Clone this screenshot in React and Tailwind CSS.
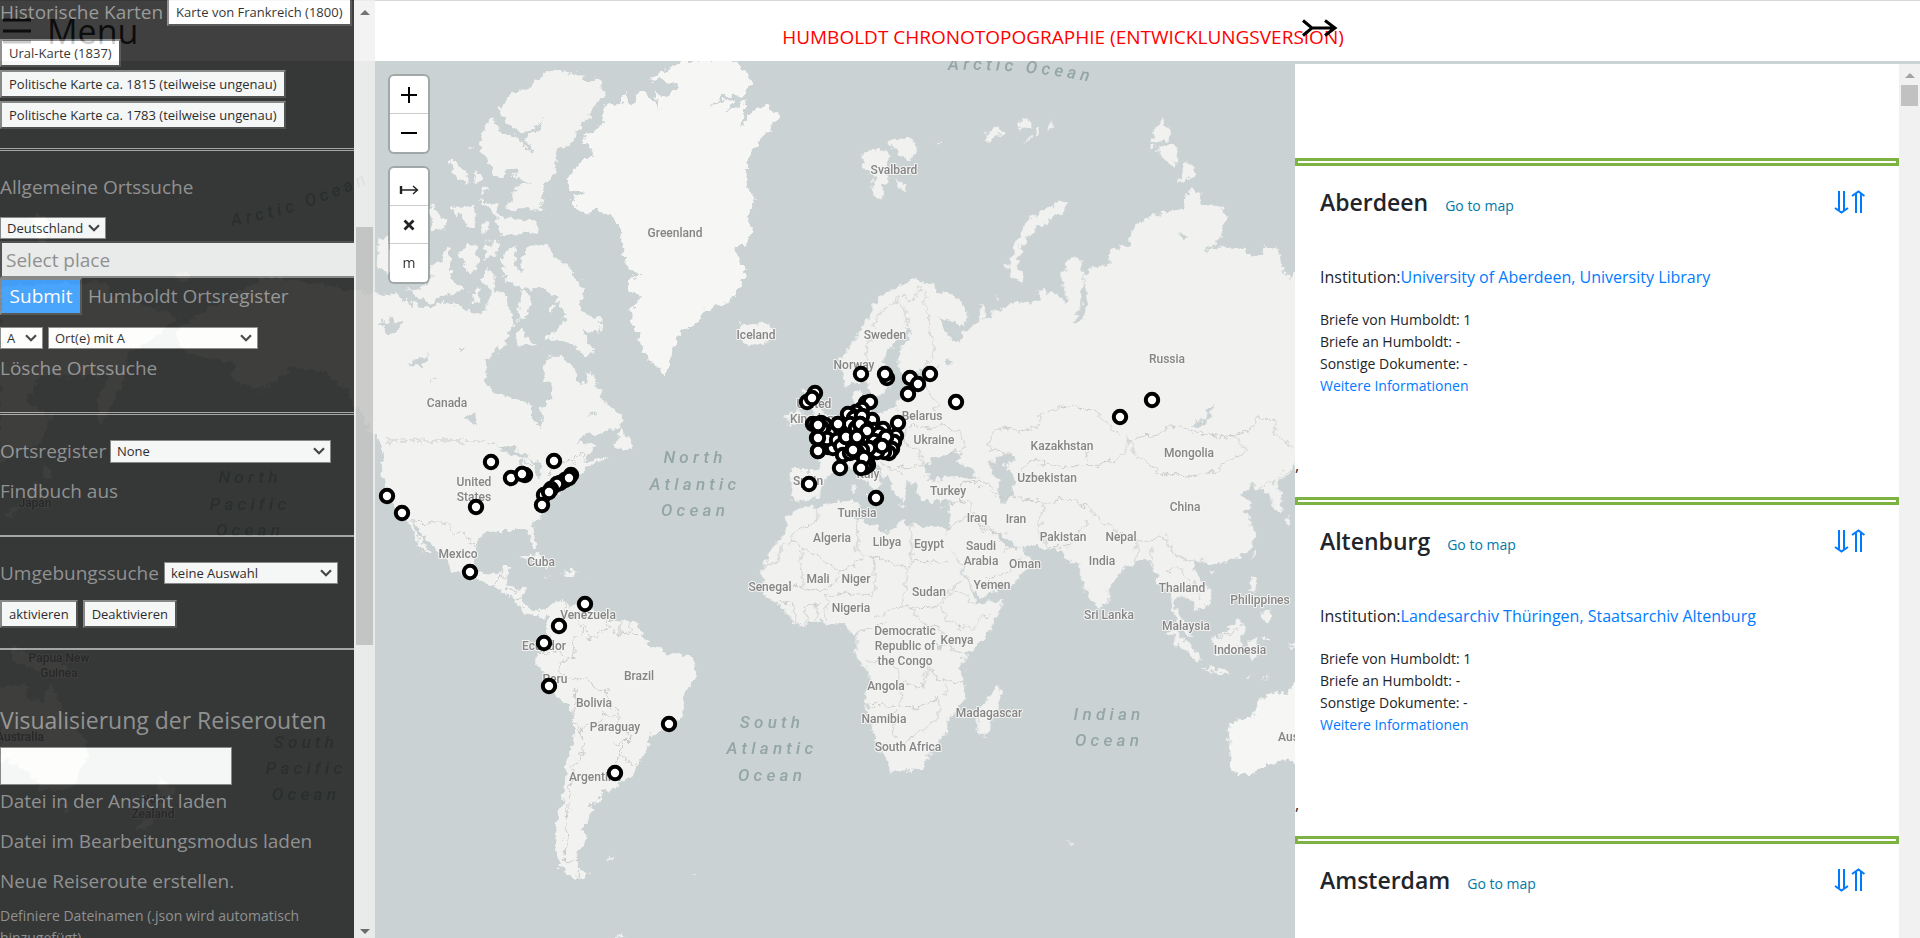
import React from "react";

/* Land outlines; frames A and B are drawn at three times the map scale. */
const LAND_A = [
  // North and South America
  "M15,885 L60,880 130,905 140,930 230,905 300,935 340,942 365,870 330,840 350,800 370,830 375,870 410,885 420,940 430,975 400,1040 360,1070 345,1110 350,1150 370,1178 400,1185 450,1200 480,1215 490,1260 510,1285 520,1260 512,1230 540,1200 545,1150 522,1135 530,1070 575,1070 610,1100 620,1140 640,1155 665,1115 700,1200 760,1250 755,1280 700,1300 640,1305 620,1330 680,1335 640,1382 720,1370 650,1405 620,1430 590,1450 550,1490 520,1520 515,1550 485,1570 490,1600 502,1640 492,1645 470,1590 400,1590 340,1600 315,1625 315,1700 330,1720 390,1720 395,1695 425,1695 410,1735 405,1755 460,1765 460,1810 500,1835 525,1825 545,1810 590,1800 600,1820 640,1810 700,1840 720,1860 800,1867 825,1925 880,1950 960,1970 982,1985 980,2030 945,2070 935,2150 895,2190 840,2205 830,2250 780,2330 745,2350 740,2370 690,2372 690,2405 665,2410 660,2455 635,2480 652,2510 620,2560 625,2600 655,2630 620,2637 570,2600 555,2540 560,2470 580,2400 590,2280 610,2220 608,2130 540,2080 520,2020 495,1990 500,1970 540,1920 530,1880 540,1850 500,1847 470,1840 430,1795 385,1770 360,1750 300,1740 240,1710 230,1680 190,1640 130,1562 135,1590 185,1668 150,1640 120,1570 90,1540 50,1490 35,1400 40,1340 15,1310 -10,1270 -80,1160 -150,1110 -230,1100 -390,1225 -310,1160 -410,1150 -410,1090 -550,1060 -590,1000 -510,940 -400,880 -310,830 -150,850 Z",
  // Greenland
  "M705,375 L700,320 735,315 770,280 775,310 790,320 815,265 835,290 872,330 850,275 892,290 925,255 885,240 840,237 880,215 920,200 940,180 1095,180 1145,250 1120,285 1060,288 1010,325 1060,300 1095,305 1065,345 1130,300 1112,380 1150,330 1190,318 1232,345 1200,385 1150,440 1135,480 1130,560 1160,600 1130,650 1150,690 1130,730 1090,740 1125,820 1110,865 1080,900 1005,930 975,975 930,992 900,1080 890,1122 850,1100 820,1050 790,980 785,930 812,890 775,870 775,840 812,830 770,800 750,690 735,655 690,630 640,640 600,595 650,575 600,570 582,540 625,495 672,468 665,440 640,430 645,405 Z",
  // Ellesmere and Axel Heiberg
  "M705,275 L665,335 640,370 600,435 560,450 555,490 560,520 525,550 520,600 510,625 405,625 430,590 430,560 480,545 430,530 440,505 410,500 400,535 370,525 350,470 330,430 345,380 365,350 400,400 440,412 480,455 490,450 455,412 500,395 525,350 495,385 440,395 400,360 385,325 440,270 475,268 500,235 550,208 640,225 640,245 680,235 Z",
  // Baffin
  "M440,735 L400,762 398,810 415,850 465,868 520,860 560,900 590,950 565,990 530,1005 530,1018 590,1020 650,1075 670,1050 640,990 680,1000 700,965 640,935 630,900 637,870 600,800 545,770 540,740 470,740 450,780 460,820 430,800 Z",
  "M330,600 L380,612 385,650 440,655 500,660 505,700 390,705 375,645 Z",
  "M110,870 L180,850 185,790 215,790 225,740 240,745 240,830 280,870 220,885 180,910 150,895 Z",
  "M20,800 L25,715 60,710 60,820 Z M180,640 L190,612 205,645 235,660 225,685 185,688 Z",
  "M245,620 L310,618 312,680 290,680 275,640 255,650 Z M265,765 L295,730 320,738 325,800 300,822 Z M343,728 L392,728 375,765 345,780 Z",
  "M235,480 L255,480 295,525 295,555 255,530 Z M315,510 L340,540 320,550 Z M335,565 L358,562 358,575 335,575 Z M335,665 L358,665 355,700 335,692 Z M295,430 L303,440 297,450 Z",
  "M435,1010 L455,985 495,1040 460,1030 440,1040 Z M300,880 L325,870 335,910 315,915 Z M540,920 L555,915 550,940 538,940 Z M455,870 L485,890 475,945 445,960 Z",
  "M1105,970 L1190,970 1215,1000 1195,1025 1160,1042 1115,1022 Z",
  "M755,1285 L785,1330 787,1350 730,1340 Z",
  "M440,1670 L500,1665 555,1705 530,1708 490,1680 Z M575,1715 L610,1712 625,1722 585,1732 Z M525,1727 L540,1728 530,1731 Z M645,1728 L657,1728 650,1732 Z",
  "M710,2572 L738,2570 722,2580 Z M728,2812 L760,2800 760,2812 Z M965,2620 L972,2620 970,2625 Z",
];
const LAND_B = [
  // Eurasia
  "M-148,1410 L-60,1410 -65,1350 -82,1310 -30,1300 0,1260 50,1230 38,1185 60,1160 62,1200 75,1225 110,1238 170,1225 185,1180 205,1150 180,1110 175,1060 205,1010 215,985 195,985 130,1080 155,1140 125,1190 100,1200 75,1130 45,1150 15,1160 0,1080 35,1035 80,960 110,900 170,860 220,835 275,850 290,875 340,885 370,910 385,950 370,975 295,955 320,1000 345,1030 380,985 420,970 420,915 440,925 435,955 470,930 560,905 600,905 590,870 640,880 682,912 665,830 690,775 722,775 732,830 722,920 700,968 722,965 745,910 732,830 750,800 810,795 812,745 868,735 868,690 950,642 1030,625 1030,590 1060,568 1080,580 1085,612 1140,615 1158,650 1140,720 1085,757 1140,735 1210,745 1220,762 1260,765 1270,740 1315,748 1325,800 1350,840 1365,805 1400,800 1400,1390 1365,1400 1310,1450 1325,1490 1325,1530 1300,1530 1290,1480 1255,1470 1240,1450 1205,1482 1240,1515 1215,1530 1248,1600 1230,1650 1180,1680 1120,1695 1070,1680 1060,1710 1110,1770 1110,1810 1072,1832 1050,1800 1012,1780 1005,1815 1060,1915 1010,1880 990,1780 960,1760 930,1680 875,1690 805,1755 802,1810 780,1832 750,1800 725,1740 720,1690 690,1690 660,1650 590,1645 530,1640 500,1610 465,1590 500,1650 545,1640 580,1690 520,1750 430,1790 408,1782 370,1710 315,1610 330,1580 330,1500 240,1500 225,1450 200,1445 190,1505 165,1480 145,1440 95,1380 125,1450 108,1480 40,1400 0,1400 -50,1440 -60,1490 -100,1505 -148,1495 Z",
  // Africa
  "M-110,1520 L-60,1520 0,1505 50,1500 60,1530 50,1555 110,1580 150,1600 180,1560 210,1575 315,1582 320,1615 360,1700 400,1780 410,1810 490,1800 470,1860 430,1920 365,1980 370,2050 380,2100 325,2150 325,2190 295,2230 240,2305 150,2320 140,2280 100,2200 75,2110 90,2030 50,1970 50,1900 0,1872 -40,1875 -60,1860 -130,1877 -180,1820 -230,1780 -232,1690 -200,1640 -160,1590 -160,1555 Z",
  "M475,2060 L485,2085 460,2150 440,2205 415,2200 412,2140 430,2110 Z",
  "M1440,2050 L1365,2050 1345,2085 1300,2075 1255,2110 1240,2150 1165,2170 1175,2300 1190,2322 1225,2322 1270,2300 1330,2280 1365,2285 1440,2285 Z",
  "M985,1890 L1010,1895 1080,1970 1075,1992 1010,1930 Z M1078,2000 L1165,2013 1165,2022 1080,2008 Z M1110,1915 L1150,1900 1195,1857 1212,1880 1195,1960 1130,1960 Z",
  "M1235,1730 L1250,1735 1245,1780 1232,1770 Z M1262,1845 L1292,1830 1290,1865 1270,1860 Z M1240,1650 L1247,1655 1235,1690 Z M1110,1715 L1128,1712 1120,1728 Z M1225,1920 L1250,1915 1250,1970 1235,1985 Z M1265,1914 L1285,1914 1285,1920 1265,1920 Z M1215,2023 L1235,2028 1230,2032 Z M1265,2040 L1290,2026 1275,2038 Z M1345,1935 L1365,1938 1362,1948 1350,1945 Z M1335,1560 L1350,1545 1352,1565 1340,1580 Z",
  // British Isles
  "M-110,1170 L-75,1180 -60,1225 -30,1260 -45,1282 -100,1285 -75,1255 -95,1200 Z M-160,1250 L-130,1225 -110,1245 -115,1275 -155,1280 Z",
  // Svalbard and the Arctic islands
  "M65,455 L100,450 120,440 145,460 145,545 130,555 128,600 105,590 95,550 110,530 80,510 65,485 Z M145,430 L160,410 200,415 235,435 225,460 200,478 175,465 Z M170,535 L200,560 195,578 175,560 Z M285,425 L300,420 300,428 Z",
  "M437,400 L465,385 495,390 480,405 445,425 Z M530,380 L560,345 570,380 550,390 Z M585,395 L600,385 605,400 592,410 Z M620,385 L640,362 638,385 Z M548,425 L575,408 570,422 Z",
  "M655,605 L682,603 675,635 620,665 580,690 545,740 535,790 558,845 520,835 500,800 530,730 560,660 600,635 Z",
  "M965,357 L990,390 985,420 935,430 940,390 Z M950,440 L1010,435 1012,500 990,500 955,460 Z M1040,478 L1068,515 1065,530 1012,550 1025,510 Z M922,435 L942,440 935,455 Z M465,885 L480,890 468,902 Z M1145,708 L1155,715 1145,722 Z",
  "M38,1450 L48,1450 46,1480 38,1480 Z M36,1180 L55,1175 50,1205 38,1200 Z M75,1480 L100,1485 95,1500 Z M170,1512 L200,1518 190,1522 Z M295,1525 L310,1525 300,1530 Z M680,2525 L697,2532 688,2538 Z",
];
/* Western edge: Siberia, Japan, Australia and New Zealand */
const LAND_C = [
  "M0,860 L180,850 330,850 330,890 420,910 540,950 450,1020 385,1060 380,1130 300,1280 288,1200 330,1120 260,1130 120,1130 80,1200 150,1250 130,1320 60,1350 0,1400 Z",
  "M130,1390 L160,1410 150,1440 130,1430 Z M100,1450 L120,1450 110,1490 60,1520 20,1560 15,1540 80,1500 Z",
  "M0,2060 L80,2055 75,2090 130,2110 150,2048 182,2120 200,2160 260,2220 262,2270 220,2360 190,2370 130,2372 80,2310 0,2280 Z M180,2405 L205,2400 195,2435 Z",
  "M30,1940 L80,1955 180,1990 235,2030 180,2020 110,2010 30,1980 Z",
  "M475,2325 L495,2345 525,2370 490,2430 475,2400 Z M450,2445 L470,2440 440,2490 405,2485 Z",
  "M520,825 L560,815 575,835 540,845 Z M90,660 L115,640 150,670 130,740 150,750 110,720 Z",
];
const WATER_A = [
  "M20,975 L70,955 100,975 60,1005 45,985 Z M115,1090 L182,1060 150,1095 118,1103 Z M270,1045 L282,1045 278,1060 Z M178,1140 L205,1130 185,1145 Z M285,1245 L310,1245 322,1270 300,1265 Z M660,1238 L680,1238 665,1245 Z",
  "M385,1352 L425,1335 480,1372 470,1380 435,1365 Z M445,1385 L460,1385 455,1440 445,1430 Z M480,1375 L520,1400 500,1430 Z M520,1425 L560,1405 545,1420 Z",
];
const WATER_B = [
  "M255,1400 L275,1375 300,1368 330,1360 365,1360 345,1385 400,1405 415,1440 340,1428 275,1440 252,1425 Z",
  "M445,1395 L490,1360 528,1370 490,1400 522,1430 520,1490 492,1510 470,1480 478,1440 Z",
  "M1055,1280 L1100,1245 1120,1205 1118,1235 1085,1280 Z M315,1075 L335,1085 325,1098 Z M1015,700 L1045,708 1020,715 Z M735,1370 L752,1358 740,1380 Z",
  "M195,1125 L270,1100 290,1105 215,1140 Z M290,1930 L305,1925 300,1955 Z M270,1985 L280,2010 275,2010 Z M312,2040 L320,2090 315,2085 Z",
];
const BORDERS_A = [
  "M45,1323 L340,1323 380,1335 440,1360 485,1400 M570,1388 L610,1388 630,1350 645,1385",
  "M120,1562 L200,1568 230,1570 260,1600 285,1600 300,1630 318,1642",
  "M370,1760 L390,1725 410,1735 M400,1750 L420,1775 460,1765 M435,1795 L460,1795",
  "M590,1805 L585,1840 620,1860 640,1900 615,1920 610,1970 570,1990 575,2020 605,2035 M640,1870 L660,1915 720,1880 740,1905 800,1900 M700,1850 L720,1880 M750,1860 L750,1905 M780,1865 L780,1900 M500,1960 L550,1950 580,1965",
  "M605,2045 L655,2030 665,2055 715,2080 715,2110 745,2130 740,2160 700,2140 690,2170 650,2170 630,2200 610,2150 620,2060 M740,2160 L750,2190 790,2210 740,2260 740,2340 M730,2230 L780,2220 M750,2265 L795,2295 M635,2180 L640,2260 610,2300 595,2400 590,2500 580,2580 625,2585 625,2630",
];
const BORDERS_B = [
  "M105,990 L110,950 170,895 190,920 205,980 M170,890 L220,900 235,865 260,880 255,920 270,960 270,1010 285,1050 250,1105 M78,1080 L78,1035 105,1000",
  "M200,1150 L260,1160 290,1215 285,1240 190,1250 M190,1275 L280,1285 300,1270 370,1310 375,1340 330,1365 M190,1275 L195,1330 235,1345 250,1400 180,1400 M110,1238 L115,1300 M115,1300 L190,1340 M120,1390 L180,1420",
  "M510,1360 L450,1350 445,1310 490,1280 540,1295 600,1280 600,1240 690,1215 710,1220 770,1230 815,1290 870,1320 830,1380 750,1400 650,1400 580,1380 545,1400 545,1420 M870,1320 L950,1305 1000,1275 1080,1300 1180,1310 1225,1355 1145,1390 1135,1410 1070,1430 960,1420 880,1360 870,1320 M1170,1310 L1230,1290 1250,1250 1300,1260 1310,1310 1360,1340",
  "M360,1450 L440,1450 465,1490 530,1490 610,1510 680,1495 740,1520 790,1570 880,1620 930,1620 980,1610 1000,1660 1040,1680 1095,1680 M610,1510 L595,1600 620,1640 690,1640 740,1560 M330,1510 L380,1500 430,1590 460,1600 M320,1590 L380,1550 470,1600 M430,1740 L510,1720 545,1670 M890,1620 L890,1690 M930,1640 L940,1700 M985,1710 L1010,1700 1050,1740 1080,1800 M1255,1470 L1310,1435 1365,1395 M1120,1915 L1170,1900 1200,1880",
  "M215,1575 L215,1685 330,1685 M205,1710 L115,1670 75,1670 50,1650 50,1560 M215,1685 L205,1720 185,1800 210,1825 290,1820 360,1740 M-230,1695 L-190,1690 -175,1640 -145,1620 -145,1600 -60,1560 -70,1520 M-145,1620 L0,1715 75,1670 M-120,1650 L-110,1760 -145,1760 M-110,1760 L-60,1770 -10,1750 0,1715 M100,1670 L105,1760 95,1790 0,1780 -40,1790 -40,1860 M-100,1870 L-110,1820 -60,1810 M-70,1860 L-75,1810 M-180,1810 L-140,1815 -130,1870",
  "M110,1850 L200,1815 250,1875 300,1880 320,1940 370,1965 M300,1820 L330,1870 390,1890 430,1850 460,1840 M340,1760 L400,1810 M50,1900 L140,1870 M80,1980 L160,1980 180,2050 250,2060 260,2010 320,2050 380,2040 M180,2050 L185,2120 75,2115 M185,2120 L230,2120 300,2095 290,2160 220,2210 160,2250 M165,2130 L160,2220 M260,1980 L275,2020",
];

const COUNTRIES = [
  ["Greenland", 675, 237], ["Iceland", 756, 339], ["Canada", 447, 407], ["United", 474, 486], ["States", 474, 501],
  ["Mexico", 458, 558], ["Cuba", 541, 566], ["Venezuela", 588, 619], ["Ecuador", 544, 650], ["Peru", 555, 683],
  ["Brazil", 639, 680], ["Bolivia", 594, 707], ["Paraguay", 615, 731], ["Argentina", 595, 781], ["Spain", 808, 485],
  ["Svalbard", 894, 174], ["Sweden", 885, 339], ["Norway", 854, 369], ["Russia", 1167, 363], ["Belarus", 922, 420],
  ["Ukraine", 934, 444], ["Kazakhstan", 1062, 450], ["Mongolia", 1189, 457], ["United", 814, 408], ["Kingdom", 814, 423],
  ["Uzbekistan", 1047, 482], ["Turkey", 948, 495], ["China", 1185, 511], ["Iraq", 977, 522], ["Iran", 1016, 523],
  ["Italy", 868, 478], ["Tunisia", 857, 517], ["Pakistan", 1063, 541], ["Nepal", 1121, 541], ["Saudi", 981, 550],
  ["Arabia", 981, 565], ["Oman", 1025, 568], ["India", 1102, 565], ["Algeria", 832, 542], ["Libya", 887, 546],
  ["Egypt", 929, 548], ["Yemen", 992, 589], ["Mali", 818, 583], ["Niger", 856, 583], ["Sudan", 929, 596],
  ["Senegal", 770, 591], ["Nigeria", 851, 612], ["Democratic", 905, 635], ["Republic of", 905, 650], ["the Congo", 905, 665],
  ["Kenya", 957, 644], ["Thailand", 1182, 592], ["Philippines", 1260, 604], ["Sri Lanka", 1109, 619], ["Malaysia", 1186, 630],
  ["Indonesia", 1240, 654], ["Angola", 886, 690], ["Madagascar", 989, 717], ["Namibia", 884, 723], ["South Africa", 908, 751],
  ["Australia", 1302, 741], ["Japan", 35, 507], ["Papua New", 59, 662], ["Guinea", 59, 677], ["Australia", 20, 741],
  ["New", 153, 803], ["Zealand", 153, 818],
];
const OCEANS = [
  ["North", 695, 463], ["Atlantic", 695, 490], ["Ocean", 695, 516],
  ["South", 772, 728], ["Atlantic", 772, 754], ["Ocean", 772, 781],
  ["Indian", 1109, 720], ["Ocean", 1109, 746],
  ["North", 250, 483], ["Pacific", 250, 510], ["Ocean", 250, 536],
  ["South", 306, 748], ["Pacific", 306, 774], ["Ocean", 306, 800],
];
const PLACES = [
  [387, 496], [402, 513], [476, 507], [491, 462], [554, 461], [525, 475], [511, 478], [522, 474],
  [571, 475], [565, 480], [560, 483], [569, 478], [557, 484], [544, 495], [551, 489], [549, 492], [542, 505],
  [470, 572], [585, 604], [559, 626], [544, 643], [549, 686], [669, 724], [615, 773], [809, 484],
  [861, 374], [887, 378], [885, 374], [910, 378], [918, 384], [908, 394], [930, 374], [956, 402],
  [1152, 400], [1120, 417], [815, 393], [807, 402], [812, 398],
  [866, 403], [870, 402], [862, 409], [856, 412], [851, 415], [848, 414], [868, 421], [872, 420], [854, 418],
  [862, 416], [813, 424], [821, 423], [825, 425], [822, 428], [817, 425], [840, 427], [847, 427], [850, 424],
  [838, 424], [856, 428], [866, 428], [860, 424], [874, 430], [883, 429], [879, 434], [896, 436], [894, 442],
  [817, 438], [822, 440], [828, 447], [833, 448], [827, 439], [818, 451], [837, 440], [841, 446], [846, 437],
  [852, 440], [857, 437], [863, 433], [867, 431], [869, 440], [874, 441], [878, 447], [886, 437], [892, 449],
  [889, 453], [884, 452], [877, 452], [880, 445], [869, 448], [862, 450], [857, 452], [843, 455], [850, 453],
  [853, 450], [867, 461], [868, 465], [865, 467], [864, 458], [861, 468], [840, 468], [898, 423],
  [886, 437], [882, 446], [860, 424], [867, 431], [846, 437], [857, 437], [818, 438], [818, 425], [818, 451],
  [876, 498],
];

function WorldMap() {
  return (
    <svg
      className="absolute inset-0 size-full"
      viewBox="0 61 1295 877"
      preserveAspectRatio="xMinYMin slice"
      role="img"
      aria-label="Weltkarte"
    >
      <defs>
        <filter id="coast" x="0" y="0" width="100%" height="100%">
          <feTurbulence type="fractalNoise" baseFrequency="0.14" numOctaves="3" seed="4" />
          <feDisplacementMap in="SourceGraphic" scale="11" xChannelSelector="R" yChannelSelector="G" />
        </filter>
        <path id="arctic-east" d="M948,70 Q1020,68 1092,82" />
        <path id="arctic-west" d="M232,226 Q300,214 366,184" />
      </defs>
      <rect y="61" width="1295" height="877" fill="#cad2d3" />
      <g filter="url(#coast)">
        <g transform="translate(370 0) scale(0.33333)">
          {LAND_A.map((d) => <path key={d} d={d} fill="#f2f2f1" />)}
          <path d={LAND_A[1]} fill="#f6f6f4" />
          {WATER_A.map((d) => <path key={d} d={d} fill="#cad2d3" />)}
          {BORDERS_A.map((d) => <path key={d} d={d} fill="none" stroke="#cacaca" strokeWidth="3" />)}
        </g>
        <g transform="translate(840 0) scale(0.33333)">
          {LAND_B.map((d) => <path key={d} d={d} fill="#f1f1f0" />)}
          <path d={LAND_B[3]} fill="#f6f6f4" />
          {WATER_B.map((d) => <path key={d} d={d} fill="#cad2d3" />)}
          {BORDERS_B.map((d) => <path key={d} d={d} fill="none" stroke="#cacaca" strokeWidth="3" />)}
        </g>
        <g transform="scale(0.33333)">
          {LAND_C.map((d) => <path key={d} d={d} fill="#f2f2f1" />)}
        </g>
      </g>
      <g
        fontFamily="Roboto, sans-serif"
        fontSize="12"
        fontWeight="500"
        fill="#858585"
        stroke="#f4f4f3"
        strokeWidth="2"
        strokeLinejoin="round"
        paintOrder="stroke"
        textAnchor="middle"
      >
        {COUNTRIES.map(([name, x, y]) => <text key={name + x + y} x={x} y={y}>{name}</text>)}
      </g>
      <g
        fontFamily="Roboto, sans-serif"
        fontSize="17"
        fontStyle="italic"
        fontWeight="500"
        fill="#93a5a4"
        textAnchor="middle"
        className="tracking-[0.25em]"
      >
        {OCEANS.map(([name, x, y]) => <text key={name + x + y} x={x} y={y}>{name}</text>)}
        <text textAnchor="start"><textPath href="#arctic-east">Arctic Ocean</textPath></text>
        <text textAnchor="start"><textPath href="#arctic-west">Arctic Ocean</textPath></text>
      </g>
      {PLACES.map(([x, y], i) => (
        <circle key={i} cx={x} cy={y} r="6.2" fill="#fff" stroke="#000" strokeWidth="4" />
      ))}
    </svg>
  );
}

function MapControls() {
  const group = "flex w-[42px] flex-col divide-y divide-[#ccc] overflow-hidden rounded-md border-2 border-black/20 bg-white bg-clip-padding";
  const cell = "flex h-[38px] items-center justify-center";
  return (
    <div className="absolute left-[388px] top-[13px] flex flex-col gap-3">
      <div className={group}>
        <button className={cell} aria-label="Zoom in">
          <svg width="16" height="16" viewBox="0 0 16 16" stroke="#000" strokeWidth="2"><path d="M0,8H16M8,0V16" /></svg>
        </button>
        <button className={cell} aria-label="Zoom out">
          <svg width="16" height="16" viewBox="0 0 16 16" stroke="#000" strokeWidth="2"><path d="M0,8H16" /></svg>
        </button>
      </div>
      <div className={group}>
        <button className={cell} aria-label="Strecke messen">
          <svg width="20" height="10" viewBox="0 0 20 10" fill="none" stroke="#222" strokeWidth="1.4" className="mt-1.5">
            <path d="M2,1V9" strokeWidth="2.4" /><path d="M2,5H18.500M14,1L18.500,5L14,9" />
          </svg>
        </button>
        <button className={cell} aria-label="Messung löschen">
          <svg width="12" height="12" viewBox="0 0 12 12" stroke="#222" strokeWidth="2.800"><path d="M1.500,1.500L10.500,10.500M10.500,1.500L1.500,10.500" /></svg>
        </button>
        <button className={cell + " text-sm text-[#333]"}>m</button>
      </div>
    </div>
  );
}

function Select({ label, value, className }) {
  return (
    <span className={"relative flex " + className}>
      <select aria-label={label} className="size-full appearance-none border border-[#767676] bg-white pl-1.5 text-[13px] leading-4 text-black">
        <option>{value}</option>
      </select>
      <svg className="pointer-events-none absolute right-1.5 top-1/2 -mt-1" width="12" height="8" viewBox="0 0 12 8" fill="none" stroke="#222" strokeWidth="2.200">
        <path d="M1,1.200L6,6.200L11,1.200" />
      </svg>
    </span>
  );
}

function PushButton({ children }) {
  return (
    <button className="h-7 whitespace-nowrap border-2 border-b-[#333] border-l-[#767676] border-r-[#333] border-t-[#767676] bg-white px-[7px] text-[13px] leading-4 text-black">
      {children}
    </button>
  );
}

function ScrollArrow({ up, color }) {
  return (
    <svg width="10" height="5" viewBox="0 0 10 5" fill={color}>
      <path d={up ? "M5,0L10,5H0Z" : "M0,0H10L5,5Z"} />
    </svg>
  );
}

function Sidebar() {
  const line = "h-10 leading-10 text-[19px] whitespace-nowrap";
  return (
    <aside className="absolute inset-y-0 left-0 z-10 flex w-[375px] overflow-hidden bg-[#111] text-[#818181] opacity-80">
      <div className="min-w-0 flex-1 overflow-hidden">
        <div className="flex h-6 items-center gap-1 whitespace-nowrap text-[19px]">
          Historische Karten <PushButton>Karte von Frankreich (1800)</PushButton>
        </div>
        <div className="mt-[15px] flex flex-col items-start gap-[3px]">
          <PushButton>Ural-Karte (1837)</PushButton>
          <PushButton>Politische Karte ca. 1815 (teilweise ungenau)</PushButton>
          <PushButton>Politische Karte ca. 1783 (teilweise ungenau)</PushButton>
        </div>
        <hr className="mt-[19px] border-0 border-t-[3px] border-double border-[#9a9a9a]" />
        <div className={line + " mt-4"}>Allgemeine Ortssuche</div>
        <Select label="Land" value="Deutschland" className="mt-[10px] h-[22px] w-[106px]" />
        <input
          aria-label="Select place"
          placeholder="Select place"
          className="mt-0.5 block h-[37px] w-full border-y-2 border-l-2 border-b-[#767676] border-l-[#333] border-t-[#333] bg-[#f0f0f0] pl-1 text-[19px] placeholder:text-[#818181]"
        />
        <div className="flex h-[37px] items-center gap-1.5 text-[19px]">
          <button className="h-full w-[82px] border-2 border-b-[#333] border-l-[#767676] border-r-[#333] border-t-[#767676] bg-[#1e90ff] text-white">
            Submit
          </button>
          Humboldt Ortsregister
        </div>
        <div className="mt-3 flex gap-[5px]">
          <Select label="Buchstabe" value="A" className="h-[22px] w-[43px]" />
          <Select label="Ort" value="Ort(e) mit A" className="h-[22px] w-[210px]" />
        </div>
        <div className={line + " -mt-px"}>Lösche Ortssuche</div>
        <hr className="mt-6 border-0 border-t-[3px] border-double border-[#9a9a9a]" />
        <div className={line + " mt-4 flex items-center gap-1.5"}>
          <span className="w-[104px]">Ortsregister</span>
          <Select label="Ortsregister" value="None" className="h-[23px] w-[221px]" />
        </div>
        <div className={line}>Findbuch aus</div>
        <hr className="mt-6 border-0 border-t-2 border-[#9a9a9a]" />
        <div className={line + " mt-4 flex items-center gap-1.5"}>
          <span className="w-[158px]">Umgebungssuche</span>
          <Select label="Umgebungssuche" value="keine Auswahl" className="h-[22px] w-[174px]" />
        </div>
        <div className="mt-[7px] flex gap-[5px]">
          <PushButton>aktivieren</PushButton>
          <PushButton>Deaktivieren</PushButton>
        </div>
        <hr className="mt-5 border-0 border-t-2 border-[#9a9a9a]" />
        <h2 className="mt-[50px] h-10 whitespace-nowrap text-[23px] leading-10">Visualisierung der Reiserouten</h2>
        <input aria-label="Dateiname der Reiseroute" className="mt-[7px] block h-[38px] w-[232px] border border-[#767676] bg-white" />
        <div className={line + " -mt-1"}>Datei in der Ansicht laden</div>
        <div className={line}>Datei im Bearbeitungsmodus laden</div>
        <div className={line}>Neue Reiseroute erstellen.</div>
        <p className="mt-1 text-sm leading-[22px]">Definiere Dateinamen (.json wird automatisch hinzugefügt)</p>
      </div>
      <div className="flex w-[21px] flex-col items-center bg-[#f1f1f1] pt-2.5 pb-1" aria-hidden="true">
        <ScrollArrow up color="#505050" />
        <div className="mt-[212px] h-[418px] w-[17px] bg-[#c1c1c1]" />
        <div className="mt-auto"><ScrollArrow color="#505050" /></div>
      </div>
    </aside>
  );
}

const ENTRIES = [
  { place: "Aberdeen", institution: "University of Aberdeen, University Library" },
  { place: "Altenburg", institution: "Landesarchiv Thüringen, Staatsarchiv Altenburg" },
  { place: "Amsterdam" },
];

function Entry({ place, institution }) {
  return (
    <article className="flex h-[339px] shrink-0 flex-col">
      <hr className="h-2 shrink-0 border-[3px] border-[#7cb342] bg-white" />
      <div className="flex items-baseline px-[25px] pt-4">
        <h3 className="text-[23px] font-semibold leading-10 text-[#212529]">{place}</h3>
        <a href="#map" className="ml-[17px] text-sm text-[#0078a8]">Go to map</a>
        <a href="#top" aria-label="Sortieren" className="ml-auto mr-[9px] self-center">
          <svg width="31" height="24" viewBox="0 0 31 24" fill="none" stroke="#007bff" strokeWidth="2">
            <path d="M5,1V20M10,1V20M1,18L7.500,22.500L14,18M22,23V4M27,23V4M18,6L24.500,1.500L30.500,6" />
          </svg>
        </a>
      </div>
      {institution && (
        <>
          <p className="mt-[43px] px-[25px] text-base leading-6 text-[#212529]">
            Institution:<a href="#institution" className="text-[#007bff]">{institution}</a>
          </p>
          <div className="mt-5 px-[25px] text-sm leading-[22px] text-[#212529]">
            <div>Briefe von Humboldt: 1</div>
            <div>Briefe an Humboldt: -</div>
            <div>Sonstige Dokumente: -</div>
            <a href="#info" className="text-[#007bff]">Weitere Informationen</a>
          </div>
          <div className="mt-auto pb-4 text-base leading-8 text-[#212529]">,</div>
        </>
      )}
    </article>
  );
}

export default function App() {
  return (
    <div className="relative flex h-screen flex-col overflow-hidden bg-white font-['Open_Sans','Noto_Sans',sans-serif]">
      <header className="relative flex h-[61px] shrink-0 items-center border-t border-[#d8d8dc]">
        <button className="flex items-center gap-4 pl-[3px] text-[34px] leading-none text-black">
          <svg width="28" height="26" viewBox="0 0 28 26" stroke="#000" strokeWidth="3"><path d="M0,2H28M0,13H28M0,24H28" /></svg>
          Menu
        </button>
        <h1 className="absolute inset-x-0 top-[22px] translate-x-[103px] text-center text-[19px] leading-7 text-[#ff0000]">
          HUMBOLDT CHRONOTOPOGRAPHIE (ENTWICKLUNGSVERSION)
        </h1>
        <svg className="absolute left-[1302px] top-[18px]" width="36" height="18" viewBox="0 0 36 18" fill="none" stroke="#000" strokeWidth="3">
          <path d="M1,1.500L10,9L1,16.500M9,9H33M23,1.500L33,9L23,16.500" />
        </svg>
      </header>
      <main className="flex min-h-0 flex-1 bg-[#cad2d3]">
        <section className="relative min-w-0 flex-1 overflow-hidden">
          <WorldMap />
          <MapControls />
        </section>
        <section className="mt-[3px] flex w-[625px] overflow-hidden bg-white">
          <div className="flex min-w-0 flex-1 flex-col overflow-hidden pt-[94px]">
            {ENTRIES.map((e) => <Entry key={e.place} {...e} />)}
          </div>
          <div className="flex w-[21px] flex-col items-center bg-[#f1f1f1] pt-[9px]" aria-hidden="true">
            <ScrollArrow up color="#a3a3a3" />
            <div className="mt-[7px] h-[21px] w-[17px] bg-[#c1c1c1]" />
          </div>
        </section>
      </main>
      <Sidebar />
    </div>
  );
}
